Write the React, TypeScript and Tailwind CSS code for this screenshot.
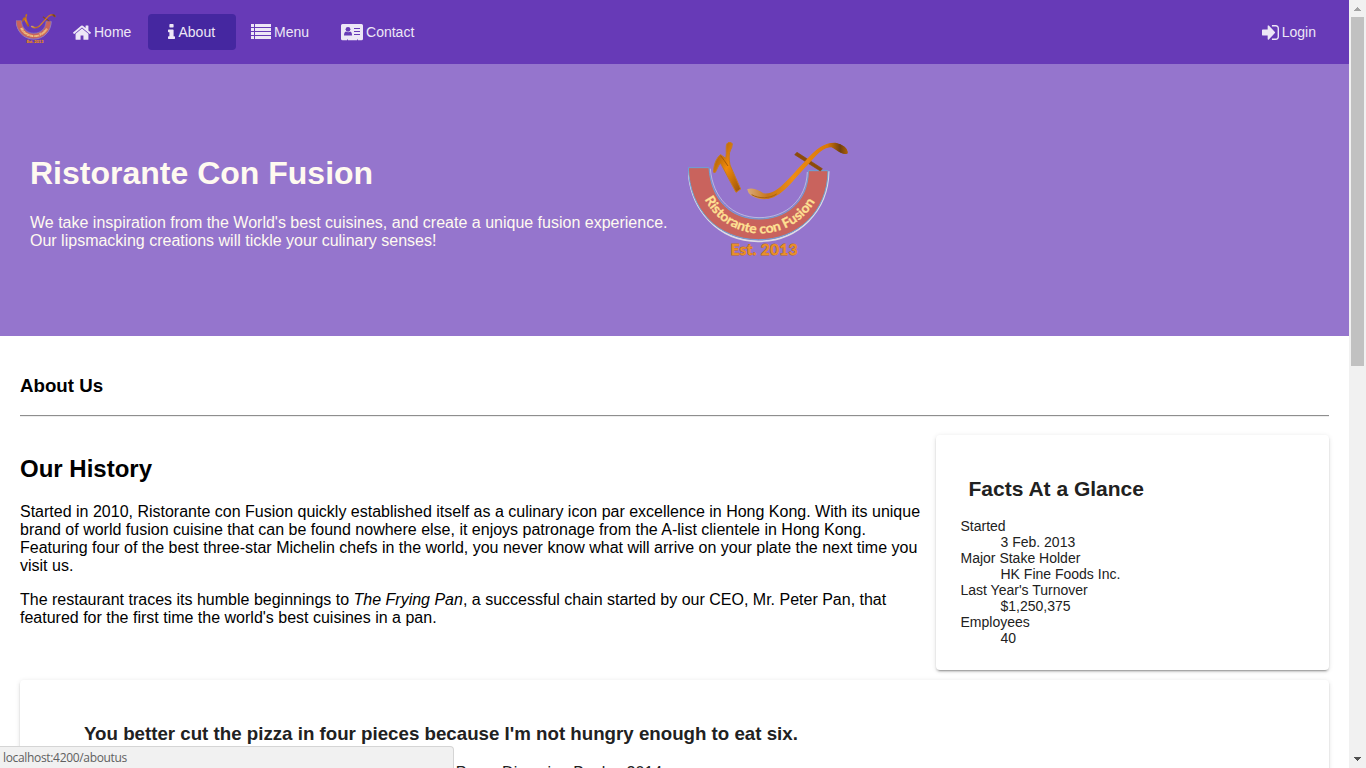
import type { ReactNode } from "react";

const icons = {
  home: "M1472 992v480q0 26-19 45t-45 19h-384v-384h-256v384h-384q-26 0-45-19t-19-45v-480q0-1 .5-3t.5-3l575-474 575 474q1 2 1 6zm223-69l-62 74q-8 9-21 11h-3q-13 0-21-7l-692-577-692 577q-12 8-24 7-13-2-21-11l-62-74q-8-10-7-23.5t11-21.5l719-599q32-26 76-26t76 26l244 204v-195q0-14 9-23t23-9h192q14 0 23 9t9 23v408l219 182q10 8 11 21.5t-7 23.5z",
  info: "M1216 1344v128q0 26-19 45t-45 19h-512q-26 0-45-19t-19-45v-128q0-26 19-45t45-19h64v-384h-64q-26 0-45-19t-19-45v-128q0-26 19-45t45-19h384q26 0 45 19t19 45v576h64q26 0 45 19t19 45zm-128-1152v192q0 26-19 45t-45 19h-256q-26 0-45-19t-19-45v-192q0-26 19-45t45-19h256q26 0 45 19t19 45z",
  login: "M1312 896q0 26-19 45l-544 544q-19 19-45 19t-45-19-19-45v-288h-448q-26 0-45-19t-19-45v-384q0-26 19-45t45-19h448v-288q0-26 19-45t45-19 45 19l544 544q19 19 19 45zm352-352v704q0 119-84.5 203.5t-203.5 84.5h-320q-13 0-22.5-9.5t-9.5-22.5q0-4-1-20t-.5-26.5 3-23.5 10-19.5 20.5-6.5h320q66 0 113-47t47-113v-704q0-66-47-113t-113-47h-312l-11.5-1-11.5-3-8-5.5-7-9-2-13.5q0-4-1-20t-.5-26.5 3-23.5 10-19.5 20.5-6.5h320q119 0 203.5 84.5t84.5 203.5z",
};

function Logo({ id, className }: { id: string; className: string }) {
  return (
    <svg viewBox="24 36 480 345" preserveAspectRatio="none" className={className}>
      <defs>
        <linearGradient id={`${id}-f`} x1="0" y1="0" x2="1" y2="0">
          <stop offset="0" stopColor="#d9a878" />
          <stop offset="0.2" stopColor="#c87516" />
          <stop offset="0.45" stopColor="#ee8c12" />
          <stop offset="0.8" stopColor="#db7907" />
          <stop offset="0.93" stopColor="#71400d" />
          <stop offset="1" stopColor="#a95d08" />
        </linearGradient>
        <linearGradient id={`${id}-r`} x1="0" y1="0" x2="1" y2="1">
          <stop offset="0" stopColor="#8d4d08" />
          <stop offset="0.5" stopColor="#f18a0b" />
          <stop offset="1" stopColor="#98520a" />
        </linearGradient>
        <path id={`${id}-arc`} d="M74 208 A188 188 0 0 0 415 194" />
      </defs>
      <path d="M25 116 C29 240 116 333 234 334 C357 334 444 242 446 124" fill="none" stroke="#dedce4" strokeWidth="5" />
      <path d="M25 113 H87 C93 208 151 267 237 267 C326 267 386 207 385 122 H444 C443 246 352 330 235 329 C111 328 29 237 25 113Z" fill="#c9635d" stroke="#6ca3d5" strokeWidth="3" />
      <path d="M91 116 C98 204 156 262 237 263 C321 263 379 207 382 126" fill="none" stroke="#c9dce8" strokeWidth="2" />
      <path d="M101 127 C100 108 108 84 122 74 L137 85 C142 67 134 44 144 38 Q151 35 157 41 Q156 54 152 59 Q144 74 150 105 L182 177 L168 187 L122 100 C112 109 111 120 106 127Z" fill={`url(#${id}-r)`} stroke="#c87a20" strokeWidth="3" />
      <path d="M122 77 Q133 91 144 108" fill="none" stroke="#a65a08" strokeWidth="3" />
      <path d="M344 74 L351 67 L427 116 L421 123Z" fill="#8d4b08" stroke="#8d4b08" strokeWidth="2" />
      <path d="M204 179 C218 175 238 182 250 192 C290 198 323 151 372 100 C411 54 436 39 466 40 C488 43 504 58 501 69 C482 75 472 56 455 50 C424 49 403 81 381 104 C345 139 317 184 280 200 C249 213 209 202 204 179Z" fill={`url(#${id}-f)`} stroke={`url(#${id}-f)`} strokeWidth="4" />
      <path d="M215 194 C237 207 269 206 290 192" fill="none" stroke="#a65f14" strokeWidth="3" />
      <text fill="#ffe093" stroke="#ffe093" strokeWidth="0.8" fontFamily="Lato, sans-serif" fontWeight="700" fontSize="40">
        <textPath href={`#${id}-arc`} textLength="404" lengthAdjust="spacingAndGlyphs">Ristorante con Fusion</textPath>
      </text>
      <text x="152" y="376" fill="#e9912b" stroke="#c96e0c" strokeWidth="3" paintOrder="stroke" fontFamily="Lato, sans-serif" fontWeight="700" fontSize="45" textLength="200" lengthAdjust="spacing">Est. 2013</text>
    </svg>
  );
}

function NavLink({ icon, children, className = "" }: { icon: ReactNode; children: ReactNode; className?: string }) {
  return (
    <a className={`flex h-9 shrink-0 items-center rounded-sm text-sm text-[#ede7f6] ${className}`}>
      {icon}
      <span>{children}</span>
    </a>
  );
}

const facts = [
  ["Started", "3 Feb. 2013"],
  ["Major Stake Holder", "HK Fine Foods Inc."],
  ["Last Year's Turnover", "$1,250,375"],
  ["Employees", "40"],
];

const cardShadow = "rounded-sm bg-white shadow-[0_3px_1px_-2px_rgba(0,0,0,.2),0_2px_2px_0_rgba(0,0,0,.14),0_1px_5px_0_rgba(0,0,0,.12)]";

export default function App() {
  return (
    <div className="relative flex h-screen overflow-hidden bg-white font-['Liberation_Sans',Arial,sans-serif] text-black">
      <div className="h-full min-w-0 flex-1 overflow-hidden">
        <header className="flex h-16 items-center bg-[#673ab7]">
          <Logo id="nav" className="mb-2 ml-4 h-[29px] w-10 shrink-0" />
          <NavLink className="ml-4 w-[60px]" icon={<svg viewBox="89 128 1614 1408" className="mr-[3px] mb-px ml-px h-4 w-[18px]" fill="currentColor"><path d={icons.home} /></svg>}>Home</NavLink>
          <NavLink className="ml-4 w-[88px] bg-[#4527a0] pl-5" icon={<svg viewBox="576 128 640 1408" className="mr-[3.5px] mb-px h-[15px] w-[7px]" preserveAspectRatio="none" fill="currentColor"><path d={icons.info} /></svg>}>About</NavLink>
          <NavLink className="ml-[15px]" icon={
            <svg viewBox="0 0 20 15" className="mr-[3px] mb-px h-[15px] w-5" fill="currentColor">
              <path d="M0 0h3v3H0zM4 0h16v3H4zM0 4h3v3H0zM4 4h16v3H4zM0 8h3v3H0zM4 8h16v3H4zM0 12h3v3H0zM4 12h16v3H4z" />
            </svg>
          }>Menu</NavLink>
          <NavLink className="ml-8" icon={
            <svg viewBox="0 0 22 17" className="mr-[3px] h-[17px] w-[22px]">
              <path d="M1.5 0h19Q22 0 22 1.5v13.3q0 1.5-1.5 1.5H17v-.8h-1v.8H7v-.8H6v.8H1.5Q0 16.3 0 14.8V1.5Q0 0 1.5 0z" fill="#ede7f6" />
              <path d="M3 11.5q0-3.4 2-4 2.2 1.4 4.3 0 1.8.7 1.8 4z" fill="#673ab7" />
              <circle cx="7" cy="5.3" r="2.4" fill="#673ab7" />
              <path d="M13 4h6v1h-6zM13 7h6v1h-6zM13 10h6v1h-6z" fill="#673ab7" />
            </svg>
          }>Contact</NavLink>
          <NavLink className="mr-[33px] ml-auto" icon={<svg viewBox="128 256 1536 1280" className="mr-[3px] h-[15px] w-[17px]" preserveAspectRatio="none" fill="currentColor"><path d={icons.login} /></svg>}>Login</NavLink>
        </header>

        <section className="flex h-[272px] items-start bg-[#9575cd] text-[#fffaf0]">
          <div className="mt-[91px] ml-[30px] w-[658px]">
            <h1 className="text-[32px] leading-[37px] font-bold">Ristorante Con Fusion</h1>
            <p className="mt-[22px] w-[640px] text-base leading-[18px]">We take inspiration from the World's best cuisines, and create a unique fusion experience. Our lipsmacking creations will tickle your culinary senses!</p>
          </div>
          <Logo id="hero" className="mt-[78px] h-[115px] w-40 shrink-0" />
        </section>

        <main className="px-5 pt-[38px]">
          <h3 className="text-[18.72px] leading-6 font-bold">About Us</h3>
          <hr className="mt-[17px] h-0.5 border-t border-b border-t-[#8e8e8e] border-b-[#eeeeee]" />
          <div className="mt-[18px] flex h-[235px]">
            <section className="w-[916px] shrink-0 pt-5">
              <h2 className="text-2xl leading-7 font-bold">Our History</h2>
              <p className="mt-5 w-[907px] text-base leading-[18px]">Started in 2010, Ristorante con Fusion quickly established itself as a culinary icon par excellence in Hong Kong. With its unique brand of world fusion cuisine that can be found nowhere else, it enjoys patronage from the A-list clientele in Hong Kong. Featuring four of the best three-star Michelin chefs in the world, you never know what will arrive on your plate the next time you visit us.</p>
              <p className="mt-4 w-[907px] text-base leading-[18px]">The restaurant traces its humble beginnings to <em>The Frying Pan</em>, a successful chain started by our CEO, Mr. Peter Pan, that featured for the first time the world's best cuisines in a pan.</p>
            </section>
            <aside className={`flex-1 pt-[42px] pl-[24.5px] text-[#212121] ${cardShadow}`}>
              <h3 className="ml-2 text-[21px] leading-6 font-bold">Facts At a Glance</h3>
              <dl className="mt-[17px] text-sm leading-4">
                {facts.map(([label, value]) => (
                  <div key={label}>
                    <dt>{label}</dt>
                    <dd className="ml-10">{value}</dd>
                  </div>
                ))}
              </dl>
            </aside>
          </div>
          <blockquote className={`mt-[10px] h-[200px] pt-[42px] pl-16 text-[#212121] ${cardShadow}`}>
            <h4 className="text-[18.72px] leading-6 font-bold">You better cut the pizza in four pieces because I'm not hungry enough to eat six.</h4>
            <footer className="mt-[18px] -ml-0.5 text-base leading-[18px]">— Yogi Berra, The Wit and Wisdom of Yogi Berra, P. Pepe, Diversion Books, 2014</footer>
          </blockquote>
        </main>
      </div>

      <div className="flex w-[17px] shrink-0 flex-col items-center bg-[#f1f1f1]">
        <svg viewBox="0 0 17 17" className="size-[17px] shrink-0" shapeRendering="crispEdges"><path d="M5 11h7l-3.5-4z" fill="#a3a3a3" /></svg>
        <div className="h-[349px] w-[13px] bg-[#c1c1c1]" />
        <svg viewBox="0 0 17 17" className="mt-auto size-[17px] shrink-0" shapeRendering="crispEdges"><path d="M5 6h7l-3.5 4z" fill="#505050" /></svg>
      </div>

      <div className="absolute bottom-0 left-0 h-[22px] w-[454px] rounded-tr border-t border-r border-[#d5d5d5] bg-[#f1f1f1] pl-[3px] font-['Open_Sans','Noto_Sans',sans-serif] text-xs leading-[22px] tracking-[-0.33px] text-[#606060]">localhost:4200/aboutus</div>
    </div>
  );
}
